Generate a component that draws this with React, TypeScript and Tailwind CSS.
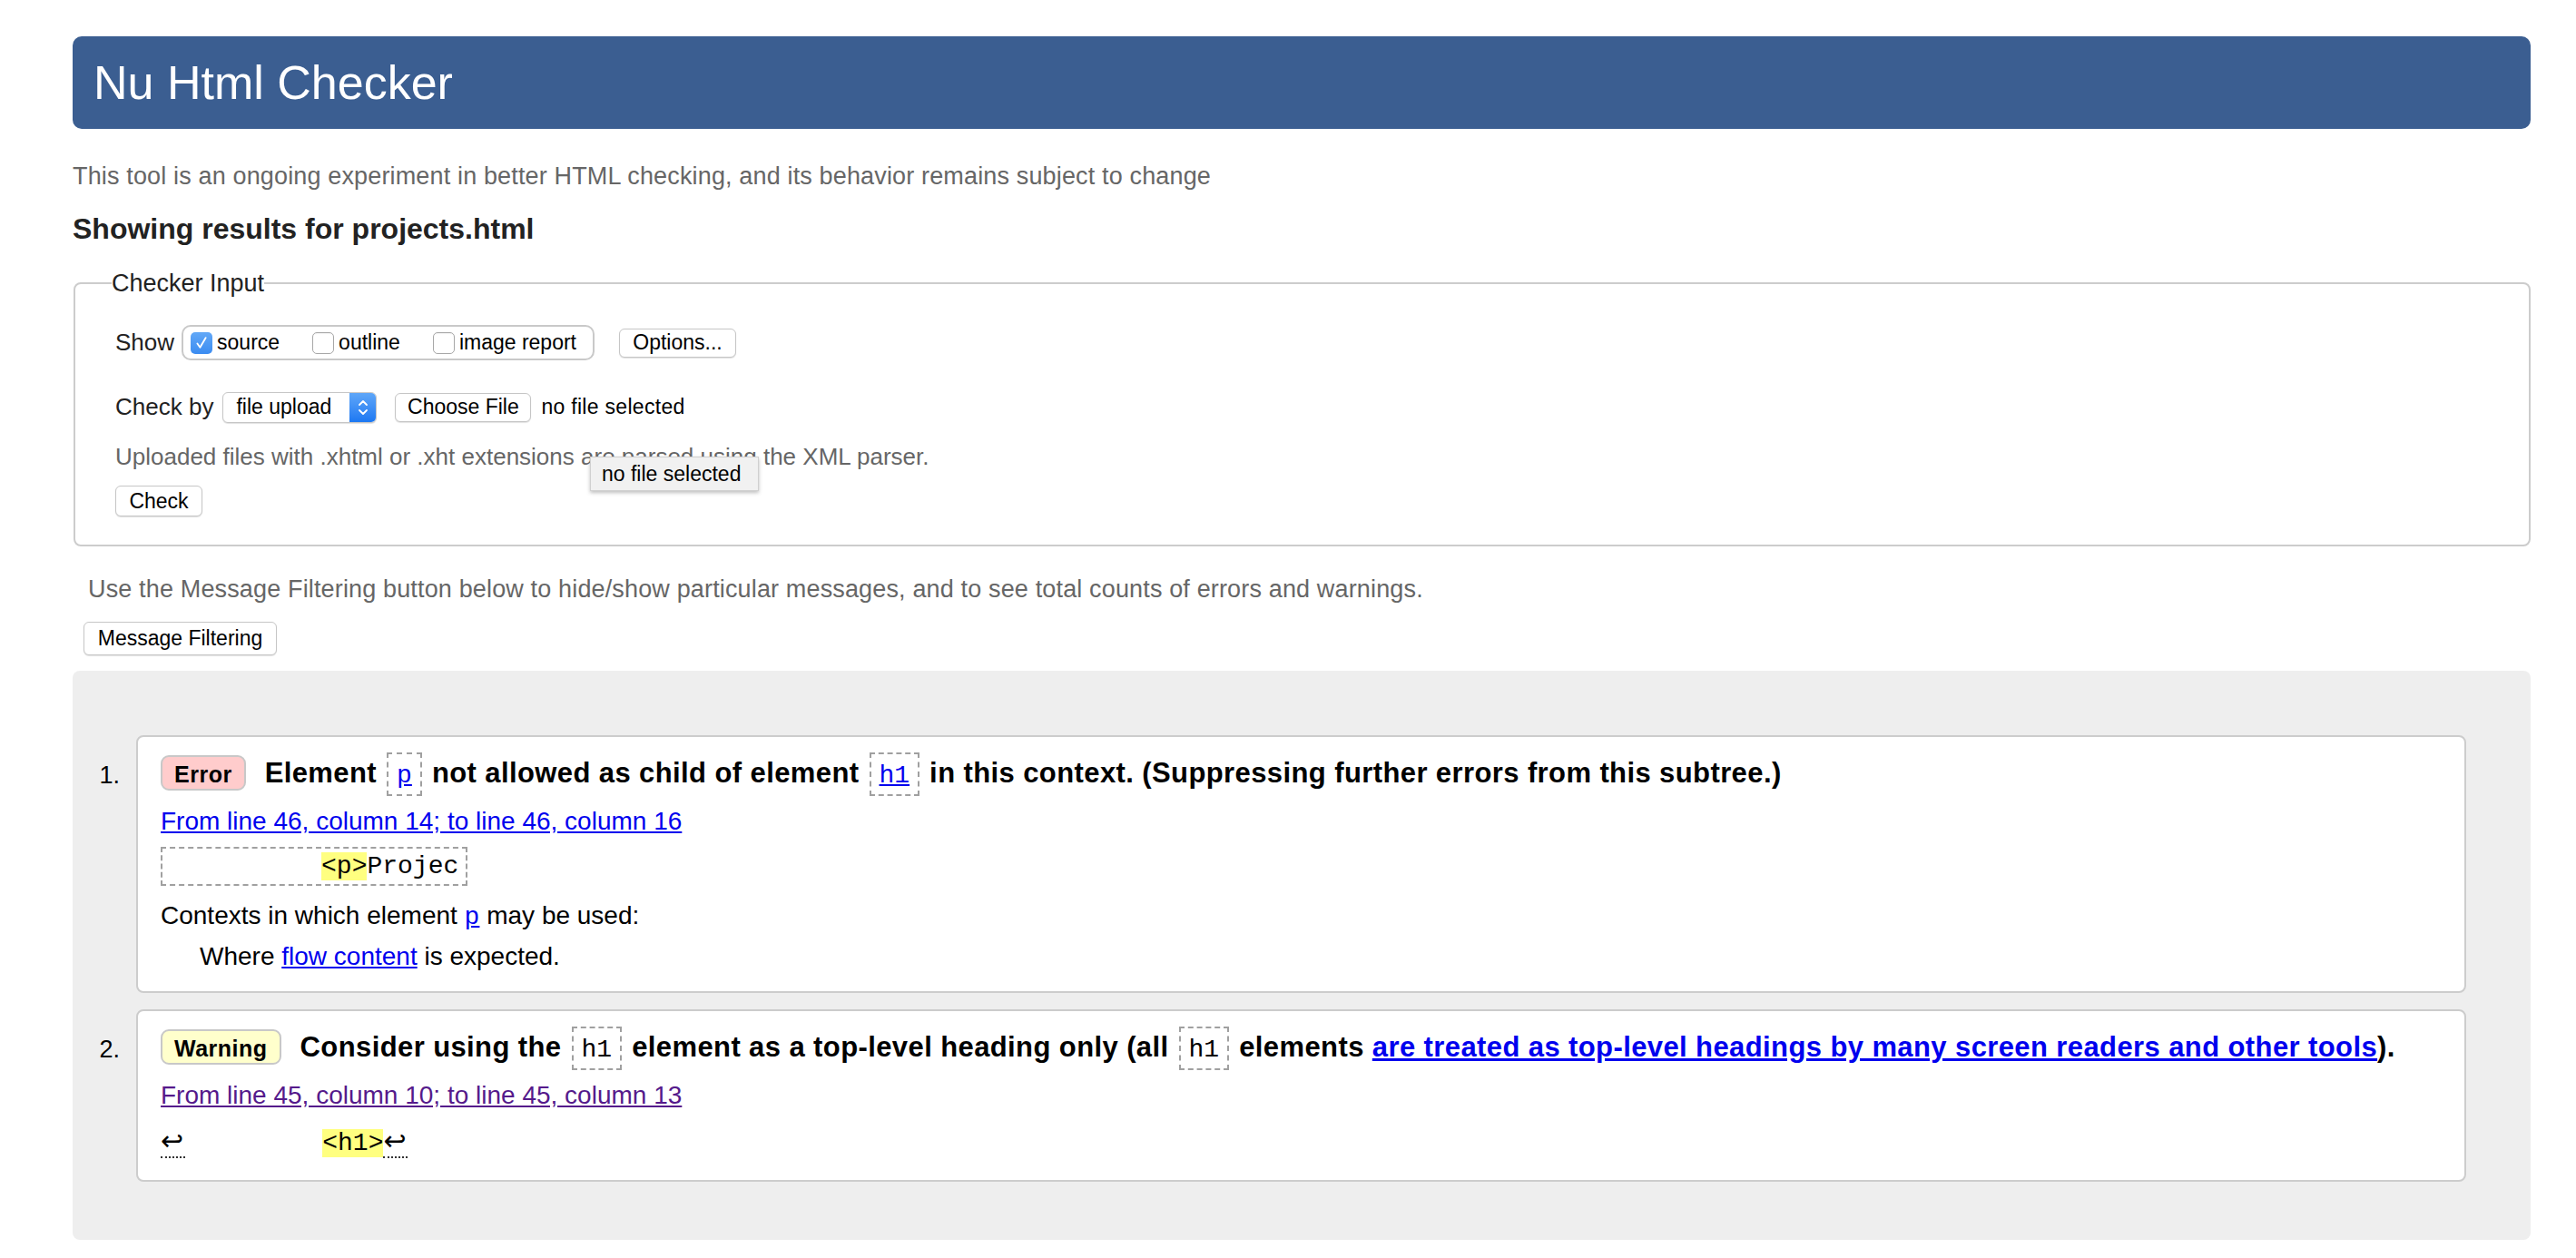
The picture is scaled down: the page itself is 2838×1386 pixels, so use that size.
import React from 'react';

const sans = "font-['Liberation_Sans',Arial,sans-serif]";
const mono = "font-['Liberation_Mono','DejaVu_Sans_Mono',monospace]";

const CheckBox: React.FC<{ checked?: boolean }> = ({ checked }) =>
  checked ? (
    <span className="flex h-[24px] w-[24px] items-center justify-center rounded-[5px] bg-gradient-to-b from-[#62a8f7] to-[#3b8cf1]">
      <svg viewBox="0 0 24 24" className="h-[20px] w-[20px]" fill="none" stroke="white" strokeWidth="2.2" strokeLinecap="round" strokeLinejoin="round">
        <path d="M6.5 12.5l3.6 5.2L17.5 5" />
      </svg>
    </span>
  ) : (
    <span className="h-[24px] w-[24px] rounded-[5px] border border-[#a8a8a8] bg-white shadow-[inset_0_1px_1px_rgba(0,0,0,0.06)]" />
  );

const Button: React.FC<{ className?: string; children: React.ReactNode }> = ({ className = '', children }) => (
  <button
    className={`flex items-center justify-center rounded-[6px] border border-[#c6c6c6] bg-white text-[23px] text-black shadow-[0_1px_1px_rgba(0,0,0,0.12)] ${className}`}
  >
    {children}
  </button>
);

// code fragment shown in a dashed frame inside the message heading
const CodeBox: React.FC<{ link?: boolean; children: React.ReactNode }> = ({ link, children }) => (
  <span
    className={`${mono} mx-[2px] inline-block border-2 border-dashed border-[#a0a0a0] px-[9px] pt-[7px] pb-[3px] text-[28px] font-normal leading-[34px] tracking-normal`}
  >
    {link ? <a className="text-[#0000ee] underline">{children}</a> : children}
  </span>
);

const Badge: React.FC<{ kind: 'error' | 'warning' }> = ({ kind }) => (
  <span
    className={`mr-[21px] inline-block rounded-[9px] border-2 border-[#c8c8c8] px-[13px] pt-[5px] pb-[2px] text-[25px] font-bold leading-[28px] tracking-[0.5px] text-black ${
      kind === 'error' ? 'bg-[#ffcccc]' : 'bg-[#ffffcc]'
    }`}
  >
    {kind === 'error' ? 'Error' : 'Warning'}
  </span>
);

const Hilite: React.FC<{ children: React.ReactNode }> = ({ children }) => (
  <span className="bg-[#ffff80]">{children}</span>
);

const ReturnMark = () => (
  <span className="inline-block w-[27px] border-b-2 border-dotted border-[#333] font-['DejaVu_Sans',sans-serif] text-[30px]">↩</span>
);

const MessageRow: React.FC<{ n: number; className?: string; children: React.ReactNode }> = ({ n, className = '', children }) => (
  <li className={`flex ${className}`}>
    <div className="w-[70px] shrink-0 pt-[29px] pr-[18px] text-right text-[27px] leading-[30px] text-black">{n}.</div>
    <div className="flex-1 rounded-[8px] border-2 border-[#cccccc] bg-white pt-[17px] pr-[25px] pb-[23px] pl-[25px] text-black">
      {children}
    </div>
  </li>
);

export default function App() {
  return (
    <div className={`${sans} min-h-screen bg-white pt-[40px] pr-[50px] pb-[24px] pl-[80px] text-[#222]`}>
      <header className="flex h-[102px] items-center rounded-[10px] bg-[#3b5e91] px-[23px]">
        <h1 className="text-[52px] leading-none text-white">Nu Html Checker</h1>
      </header>

      <p className="mt-[37px] text-[27px] leading-[30px] tracking-[0.15px] text-[#666]">
        This tool is an ongoing experiment in better HTML checking, and its behavior remains subject to change
      </p>
      <h2 className="mt-[26px] text-[32px] font-bold leading-[34px] text-[#222]">Showing results for projects.html</h2>

      <fieldset className="mt-[28px] ml-px rounded-[8px] border-2 border-[#cccccc] pb-[31px] pl-[44px]">
        <legend className="-ml-[4px] text-[27px] leading-[30px] text-[#222]">Checker Input</legend>

        <div className="mt-[31px] flex items-center">
          <span className="text-[26px] text-[#222]">Show</span>
          <div className="ml-[8px] flex h-[39px] items-center gap-[36px] rounded-[10px] border-2 border-[#c9c9c9] pr-[18px] pl-[8px]">
            <label className="flex items-center gap-[5px] text-[23px] text-black">
              <CheckBox checked />
              source
            </label>
            <label className="flex items-center gap-[5px] text-[23px] text-black">
              <CheckBox />
              outline
            </label>
            <label className="flex items-center gap-[5px] text-[23px] text-black">
              <CheckBox />
              image report
            </label>
          </div>
          <Button className="ml-[27px] h-[32px] w-[129px]">Options...</Button>
        </div>

        <div className="mt-[32px] flex items-center">
          <span className="text-[26px] text-[#222]">Check by</span>
          <div className="ml-[10px] flex h-[34px] w-[170px] items-stretch overflow-hidden rounded-[6px] border border-[#c6c6c6] bg-white shadow-[0_1px_1px_rgba(0,0,0,0.12)]">
            <span className="flex flex-1 items-center pl-[14px] text-[23px] text-black">file upload</span>
            <span className="flex w-[29px] items-center justify-center bg-gradient-to-b from-[#5ea6f8] to-[#1b78f2]">
              <svg viewBox="0 0 16 24" className="h-[24px] w-[16px]" fill="none" stroke="white" strokeWidth="1.8" strokeLinecap="round" strokeLinejoin="round">
                <path d="M4 9l4-4 4 4" />
                <path d="M4 15l4 4 4-4" />
              </svg>
            </span>
          </div>
          <Button className="ml-[20px] h-[32px] w-[150px]">Choose File</Button>
          <span className="ml-[11px] text-[23px] tracking-[0.3px] text-black">no file selected</span>
        </div>

        <div className="relative mt-[20px]">
          <p className="text-[26px] leading-[30px] text-[#666]">
            Uploaded files with .xhtml or .xht extensions are parsed using the XML parser.
          </p>
          <div className="absolute top-[15px] left-[523px] flex h-[38px] w-[186px] items-center border border-[#d0d0d0] bg-[#f1f1f1] pl-[12px] text-[23px] text-black shadow-[0_2px_4px_rgba(0,0,0,0.25)]">
            no file selected
          </div>
        </div>

        <Button className="mt-[17px] h-[34px] w-[96px]">Check</Button>
      </fieldset>

      <p className="mt-[32px] ml-[17px] text-[27px] leading-[30px] tracking-[0.15px] text-[#666]">
        Use the Message Filtering button below to hide/show particular messages, and to see total counts of errors and warnings.
      </p>
      <Button className="mt-[21px] ml-[12px] h-[37px] w-[213px]">Message Filtering</Button>

      <div className="mt-[17px] rounded-[8px] bg-[#eeeeee] pt-[71px] pr-[71px] pb-[64px]">
        <ol>
          <MessageRow n={1}>
            <div className="text-[31px] font-bold leading-[34px] tracking-[0.4px]">
              <Badge kind="error" />
              Element <CodeBox link>p</CodeBox> not allowed as child of element <CodeBox link>h1</CodeBox> in this
              context. (Suppressing further errors from this subtree.)
            </div>
            <p className="mt-[13px] text-[28px] leading-[30px]">
              <a className="text-[#0000ee] underline">From line 46, column 14; to line 46, column 16</a>
            </p>
            <div className={`${mono} mt-[13px] w-fit border-2 border-dashed border-[#a0a0a0] pt-[3px] pr-[8px] pb-[2px] pl-[7px] text-[28px] leading-[34px] whitespace-pre text-black`}>
              {'          '}
              <Hilite>{'<p>'}</Hilite>Projec
            </div>
            <p className="mt-[18px] text-[28px] leading-[30px]">
              Contexts in which element <a className={`${mono} text-[28px] text-[#0000ee] underline`}>p</a> may be used:
            </p>
            <p className="mt-[13px] pl-[43px] text-[28px] leading-[30px]">
              Where <a className="text-[#0000ee] underline">flow content</a> is expected.
            </p>
          </MessageRow>

          <MessageRow n={2} className="mt-[18px]">
            <div className="text-[31px] font-bold leading-[34px] tracking-[0.4px]">
              <Badge kind="warning" />
              Consider using the <CodeBox>h1</CodeBox> element as a top-level heading only (all <CodeBox>h1</CodeBox>{' '}
              elements <a className="text-[#0000ee] underline">are treated as top-level headings by many screen readers and other tools</a>).
            </div>
            <p className="mt-[13px] text-[28px] leading-[30px]">
              <a className="text-[#551a8b] underline">From line 45, column 10; to line 45, column 13</a>
            </p>
            <div className={`${mono} mt-[18px] text-[28px] leading-[34px] whitespace-pre text-black`}>
              <ReturnMark />
              {'         '}
              <Hilite>{'<h1>'}</Hilite>
              <ReturnMark />
            </div>
          </MessageRow>
        </ol>
      </div>
    </div>
  );
}
